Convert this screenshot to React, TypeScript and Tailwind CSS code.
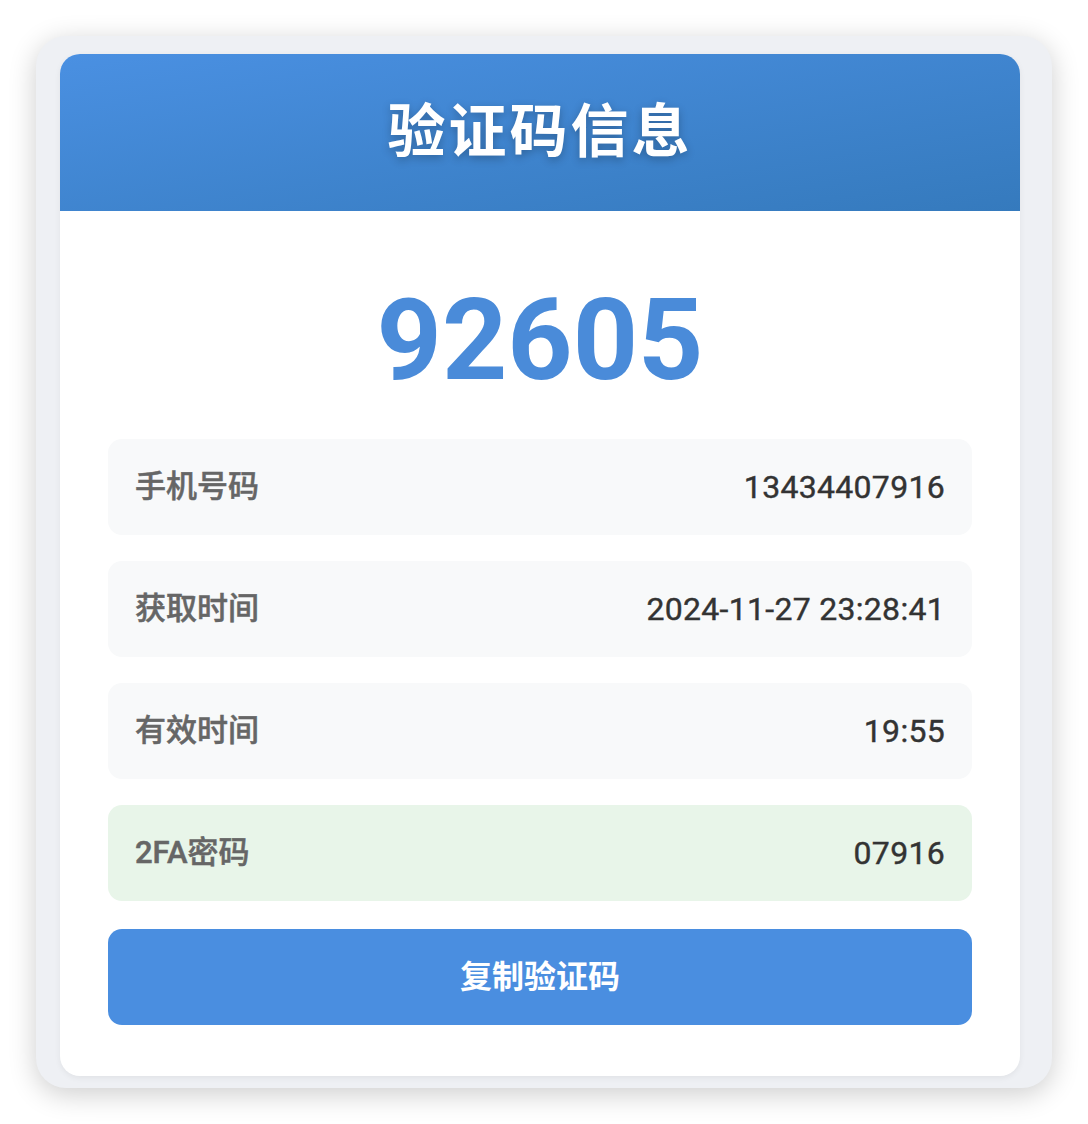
const rows = [
  { label: "手机号码", value: "13434407916", tone: "bg-[#f8f9fa]" },
  { label: "获取时间", value: "2024-11-27 23:28:41", tone: "bg-[#f8f9fa]" },
  { label: "有效时间", value: "19:55", tone: "bg-[#f8f9fa]" },
  { label: "2FA密码", value: "07916", tone: "bg-[#e8f5e9]" },
];

const font = "font-['Roboto','Noto_Sans_CJK_SC',sans-serif]";

export default function App() {
  return (
    <div className={`min-h-screen bg-white p-[36px] ${font}`}>
      <div className="rounded-[30px] bg-[#eef0f4] pt-[18px] pr-[32px] pb-[12px] pl-[24px] shadow-[0_6px_28px_rgba(0,0,0,0.2)]">
        <div className="overflow-hidden rounded-[20px] bg-white shadow-[0_2px_6px_rgba(0,0,0,0.06)]">
          <header className="flex h-[157px] items-center justify-center bg-gradient-to-br from-[#4a90e2] to-[#357abd]">
            <h1 className="text-[58px] font-bold tracking-[3px] text-white [text-shadow:0_3px_8px_rgba(0,0,0,0.25)]">
              验证码信息
            </h1>
          </header>

          <div className="px-[48px] pb-[51px]">
            <div className="pt-[72px] pb-[42px] text-center text-[114px] leading-none font-bold text-[#4a8bd9]">
              92605
            </div>

            <div className="flex flex-col gap-[26px]">
              {rows.map((row) => (
                <div
                  key={row.label}
                  className={`flex h-[96px] items-center justify-between rounded-[14px] px-[27px] ${row.tone}`}
                >
                  <span className="text-[31px] font-medium text-[#666] [-webkit-text-stroke:0.5px_#666]">
                    {row.label}
                  </span>
                  <span className="text-[32px] font-normal tracking-[0.3px] text-[#333] [-webkit-text-stroke:0.4px_#333]">
                    {row.value}
                  </span>
                </div>
              ))}
            </div>

            <button className="mt-[28px] flex h-[96px] w-full items-center justify-center rounded-[14px] bg-[#4a8ee0] text-[32px] font-bold text-white">
              复制验证码
            </button>
          </div>
        </div>
      </div>
    </div>
  );
}
